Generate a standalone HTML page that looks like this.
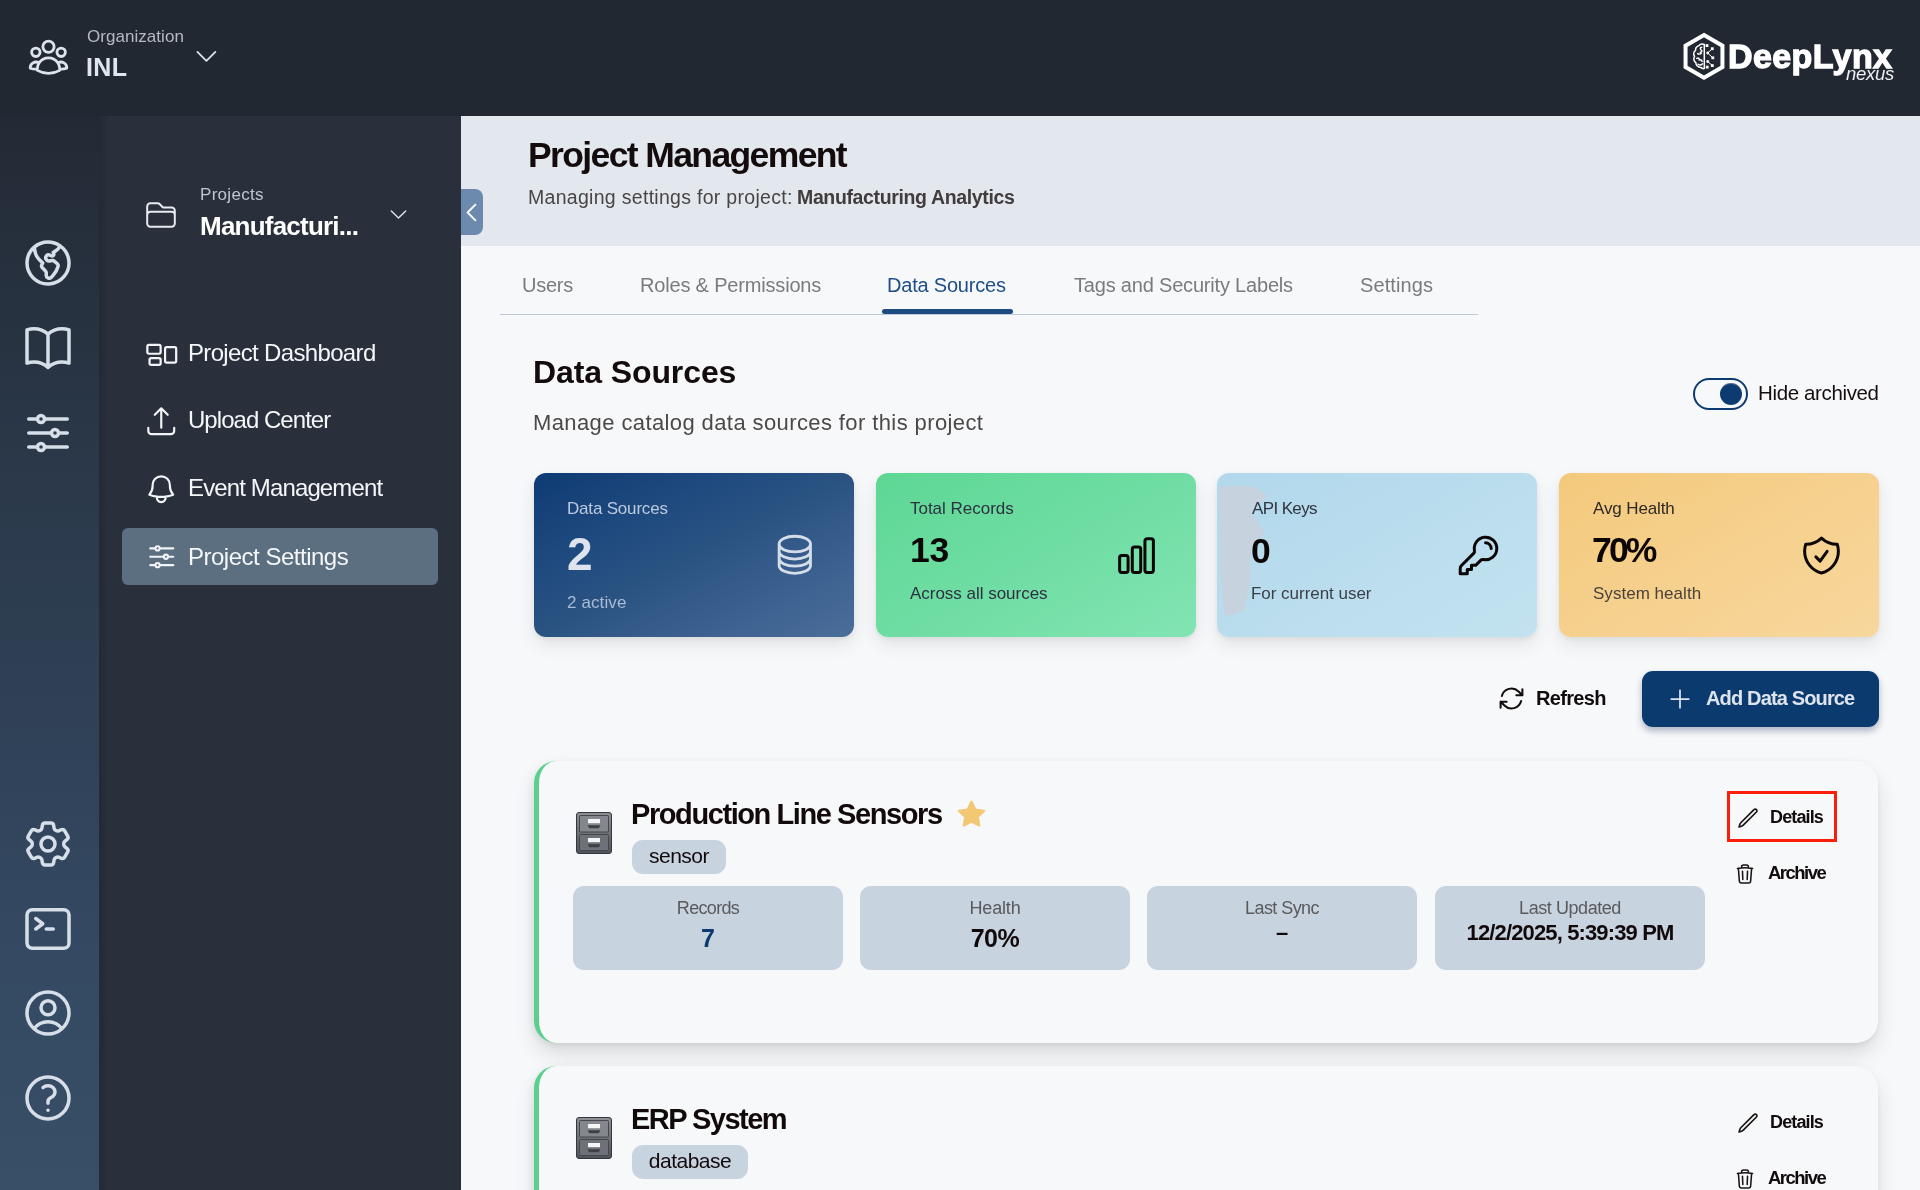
<!DOCTYPE html>
<html><head><meta charset="utf-8"><title>Project Management</title>
<style>
html,body{margin:0;padding:0;width:1920px;height:1190px;overflow:hidden;background:#f7f8fa;}
body{position:relative;font-family:"Liberation Sans",sans-serif;}
.t{position:absolute;white-space:nowrap;font-family:"Liberation Sans",sans-serif;will-change:transform;}
.b{position:absolute;}
.ic{position:absolute;overflow:visible;}
</style></head><body>
<div class="b" style="left:0px;top:0px;width:1920px;height:1190px;background:#f7f8fa;"></div>
<div class="b" style="left:0px;top:0px;width:99px;height:1190px;background:linear-gradient(180deg,#212731 0%,#232a35 10%,#2c3b4d 45%,#334760 75%,#384f68 100%);"></div>
<div class="b" style="left:99px;top:116px;width:362px;height:1074px;background:linear-gradient(90deg,#232a34 0px,#29303c 10px,#29303c 100%);"></div>
<div class="b" style="left:0px;top:0px;width:1920px;height:116px;background:#222831;"></div>
<div class="b" style="left:461px;top:116px;width:1459px;height:130px;background:#e3e8ef;"></div>
<svg class="ic" style="left:25.60px;top:34.20px;width:45px;height:45px;" viewBox="0 0 24 24" fill="none" stroke="#dde3ea" stroke-width="1.5" stroke-linecap="round" stroke-linejoin="round"><path d="M18 18.72a9.094 9.094 0 0 0 3.741-.479 3 3 0 0 0-4.682-2.72m.94 3.198.001.031c0 .225-.012.447-.037.666A11.944 11.944 0 0 1 12 21c-2.17 0-4.207-.576-5.963-1.584A6.062 6.062 0 0 1 6 18.719m12 0a5.971 5.971 0 0 0-.941-3.197m0 0A5.995 5.995 0 0 0 12 12.75a5.995 5.995 0 0 0-5.058 2.772m0 0a3 3 0 0 0-4.681 2.72 8.986 8.986 0 0 0 3.74.477m.94-3.197a5.971 5.971 0 0 0-.94 3.197M15 6.75a3 3 0 1 1-6 0 3 3 0 0 1 6 0Zm6 3a2.25 2.25 0 1 1-4.5 0 2.25 2.25 0 0 1 4.5 0Zm-13.5 0a2.25 2.25 0 1 1-4.5 0 2.25 2.25 0 0 1 4.5 0Z"/></svg>
<div class="t" style="top:28px;font-size:17px;font-weight:400;color:#b5bac2;letter-spacing:0.044px;line-height:17px;left:87.23px;">Organization</div>
<div class="t" style="top:55px;font-size:25px;font-weight:700;color:#dfe6ee;letter-spacing:0.413px;line-height:25px;left:86.38px;">INL</div>
<svg class="ic" style="left:191.60px;top:42.10px;width:28.8px;height:28.8px;" viewBox="0 0 24 24" fill="none" stroke="#dde3ea" stroke-width="1.5" stroke-linecap="round" stroke-linejoin="round"><path d="m19.5 8.25-7.5 7.5-7.5-7.5"/></svg>
<svg class="ic" style="left:1680px;top:30px;width:50px;height:56px" viewBox="0 0 50 56">
<path d="M24 5.1 L42.45 15.75 L42.45 37.05 L24 47.7 L5.55 37.05 L5.55 15.75 Z" fill="none" stroke="#fff" stroke-width="4" stroke-linejoin="miter"/>
<g fill="none" stroke="#fff" stroke-width="1.5" stroke-linecap="round" stroke-linejoin="round">
<path d="M24.3 14.5 C22 13.6 19.8 14.2 18.8 15.8 C16.6 16.2 15.2 18.4 15.6 20.4 C13.4 21.8 13.2 24.6 14.6 26.4 C13.2 28.4 13.8 31.4 15.8 32.6 C16 35.2 18.2 37.4 20.8 37.4 C22 38.6 23.4 38.8 24.3 38.4 Z"/>
<path d="M21.8 17.2 C20.2 17.4 19.8 19 21 19.8 C22.4 20.6 22 22.4 20.2 22.2 M17.6 23.6 C18.8 24.4 20.6 24 21.2 23.2 M16.8 28.4 C18.4 27.6 19.6 28.6 19.2 30 C20.6 29.4 22 30 22 31.4 M18.2 34.2 C19.6 35.4 21.6 35 22.4 33.8"/>
</g>
<g fill="#fff">
<rect x="25.6" y="14.2" width="2.8" height="2.8"/><rect x="30.9" y="17.3" width="2.8" height="2.8"/><circle cx="27.7" cy="23" r="1.4"/><rect x="31.4" y="26.4" width="2.8" height="2.8"/><circle cx="27.7" cy="31.5" r="1.4"/><rect x="30.9" y="34.2" width="2.8" height="2.8"/><rect x="25.8" y="35.7" width="2.8" height="2.8"/>
</g>
<g stroke="#fff" stroke-width="1"><path d="M27.7 23 L32.3 18.7 M27.7 23 L32.8 27.8 M27.7 31.5 L32.3 35.6"/></g>
</svg>
<div class="t" style="top:39px;font-size:34px;font-weight:700;color:#ffffff;letter-spacing:0.389px;line-height:34px;left:1728.29px;-webkit-text-stroke:1.3px #fff;">DeepLynx</div>
<div class="t" style="left:1846px;top:64.84px;font-size:18.5px;line-height:18.5px;font-style:italic;font-weight:400;color:#eef0f3;letter-spacing:-0.3px;">nexus</div>
<svg class="ic" style="left:20.00px;top:235.00px;width:56px;height:56px;" viewBox="0 0 24 24" fill="none" stroke="#d6dee8" stroke-width="1.5" stroke-linecap="round" stroke-linejoin="round"><path d="m6.115 5.19.319 1.913A6 6 0 0 0 8.11 10.36L9.75 12l-.387.775c-.217.433-.132.956.21 1.298l1.348 1.348c.21.21.329.497.329.795v1.089c0 .426.24.815.622 1.006l.153.076c.433.217.956.132 1.298-.21l.723-.723a8.7 8.7 0 0 0 2.288-4.042 1.087 1.087 0 0 0-.358-1.099l-1.33-1.108c-.251-.21-.582-.299-.905-.245l-1.17.195a1.125 1.125 0 0 1-.98-.314l-.295-.295a1.125 1.125 0 0 1 0-1.591l.13-.132a1.125 1.125 0 0 1 1.3-.21l.603.302a.809.809 0 0 0 1.086-1.086L14.25 7.5l1.256-.837a4.5 4.5 0 0 0 1.528-1.732l.146-.292M6.115 5.19A9 9 0 1 0 17.18 4.64M6.115 5.19A8.965 8.965 0 0 1 12 3c1.929 0 3.716.607 5.18 1.64"/></svg>
<svg class="ic" style="left:20.00px;top:320.00px;width:56px;height:56px;" viewBox="0 0 24 24" fill="none" stroke="#d6dee8" stroke-width="1.5" stroke-linecap="round" stroke-linejoin="round"><path d="M12 6.042A8.967 8.967 0 0 0 6 3.75c-1.052 0-2.062.18-3 .512v14.25A8.987 8.987 0 0 1 6 18c2.305 0 4.408.867 6 2.292m0-14.25a8.966 8.966 0 0 1 6-2.292c1.052 0 2.062.18 3 .512v14.25A8.987 8.987 0 0 0 18 18a8.967 8.967 0 0 0-6 2.292m0-14.25v14.25"/></svg>
<svg class="ic" style="left:20.00px;top:405.00px;width:56px;height:56px;" viewBox="0 0 24 24" fill="none" stroke="#d6dee8" stroke-width="1.5" stroke-linecap="round" stroke-linejoin="round"><path d="M10.5 6h9.75M10.5 6a1.5 1.5 0 1 1-3 0m3 0a1.5 1.5 0 1 0-3 0M3.75 6H7.5m3 12h9.75m-9.75 0a1.5 1.5 0 0 1-3 0m3 0a1.5 1.5 0 0 0-3 0m-3.75 0H7.5m9-6h3.75m-3.75 0a1.5 1.5 0 0 1-3 0m3 0a1.5 1.5 0 0 0-3 0m-9.75 0h9.75"/></svg>
<svg class="ic" style="left:20.00px;top:816.00px;width:56px;height:56px;" viewBox="0 0 24 24" fill="none" stroke="#d6dee8" stroke-width="1.5" stroke-linecap="round" stroke-linejoin="round"><path d="M9.594 3.94c.09-.542.56-.94 1.11-.94h2.593c.55 0 1.02.398 1.11.94l.213 1.281c.063.374.313.686.645.87.074.04.147.083.22.127.325.196.72.257 1.075.124l1.217-.456a1.125 1.125 0 0 1 1.37.49l1.296 2.247a1.125 1.125 0 0 1-.26 1.431l-1.003.827c-.293.241-.438.613-.43.992a7.723 7.723 0 0 1 0 .255c-.008.378.137.75.43.991l1.004.827c.424.35.534.955.26 1.43l-1.298 2.247a1.125 1.125 0 0 1-1.369.491l-1.217-.456c-.355-.133-.75-.072-1.076.124a6.47 6.47 0 0 1-.22.128c-.331.183-.581.495-.644.869l-.213 1.281c-.09.543-.56.94-1.11.94h-2.594c-.55 0-1.019-.398-1.11-.94l-.213-1.281c-.062-.374-.312-.686-.644-.87a6.52 6.52 0 0 1-.22-.127c-.325-.196-.72-.257-1.076-.124l-1.217.456a1.125 1.125 0 0 1-1.369-.49l-1.297-2.247a1.125 1.125 0 0 1 .26-1.431l1.004-.827c.292-.24.437-.613.43-.991a6.932 6.932 0 0 1 0-.255c.007-.38-.138-.751-.43-.992l-1.004-.827a1.125 1.125 0 0 1-.26-1.43l1.297-2.247a1.125 1.125 0 0 1 1.37-.491l1.216.456c.356.133.751.072 1.076-.124.072-.044.146-.086.22-.128.332-.183.582-.495.644-.869l.214-1.28Z"/><path d="M15 12a3 3 0 1 1-6 0 3 3 0 0 1 6 0Z"/></svg>
<svg class="ic" style="left:20.00px;top:901.00px;width:56px;height:56px;" viewBox="0 0 24 24" fill="none" stroke="#d6dee8" stroke-width="1.5" stroke-linecap="round" stroke-linejoin="round"><path d="m6.75 7.5 3 2.25-3 2.25m4.5 0h3m-9 8.25h13.5A2.25 2.25 0 0 0 21 18V6a2.25 2.25 0 0 0-2.25-2.25H5.25A2.25 2.25 0 0 0 3 6v12a2.25 2.25 0 0 0 2.25 2.25Z"/></svg>
<svg class="ic" style="left:20.00px;top:985.00px;width:56px;height:56px;" viewBox="0 0 24 24" fill="none" stroke="#d6dee8" stroke-width="1.5" stroke-linecap="round" stroke-linejoin="round"><path d="M17.982 18.725A7.488 7.488 0 0 0 12 15.75a7.488 7.488 0 0 0-5.982 2.975m11.963 0a9 9 0 1 0-11.963 0m11.963 0A8.966 8.966 0 0 1 12 21a8.966 8.966 0 0 1-5.982-2.275M15 9.75a3 3 0 1 1-6 0 3 3 0 0 1 6 0Z"/></svg>
<svg class="ic" style="left:20.00px;top:1070.00px;width:56px;height:56px;" viewBox="0 0 24 24" fill="none" stroke="#d6dee8" stroke-width="1.5" stroke-linecap="round" stroke-linejoin="round"><path d="M9.879 7.519c1.171-1.025 3.071-1.025 4.242 0 1.172 1.025 1.172 2.687 0 3.712-.203.179-.43.326-.67.442-.745.361-1.45.999-1.45 1.827v.75M21 12a9 9 0 1 1-18 0 9 9 0 0 1 18 0Zm-9 5.25h.008v.008H12v-.008Z"/></svg>
<svg class="ic" style="left:143.80px;top:197.75px;width:34px;height:34px;" viewBox="0 0 24 24" fill="none" stroke="#e8ecf0" stroke-width="1.4" stroke-linecap="round" stroke-linejoin="round"><path d="M2.25 12.75V12A2.25 2.25 0 0 1 4.5 9.75h15A2.25 2.25 0 0 1 21.75 12v.75m-8.69-6.44-2.12-2.12a1.5 1.5 0 0 0-1.061-.44H4.5A2.25 2.25 0 0 0 2.25 6v12a2.25 2.25 0 0 0 2.25 2.25h15A2.25 2.25 0 0 0 21.75 18V9a2.25 2.25 0 0 0-2.25-2.25h-5.379a1.5 1.5 0 0 1-1.06-.44Z"/></svg>
<div class="t" style="top:186px;font-size:17px;font-weight:400;color:#c0c6cf;letter-spacing:0.298px;line-height:17px;left:199.64px;">Projects</div>
<div class="t" style="top:213px;font-size:26px;font-weight:700;color:#ffffff;letter-spacing:-0.778px;line-height:26px;left:199.81px;">Manufacturi...</div>
<svg class="ic" style="left:386.50px;top:203.00px;width:23px;height:23px;" viewBox="0 0 24 24" fill="none" stroke="#dde3ea" stroke-width="1.5" stroke-linecap="round" stroke-linejoin="round"><path d="m19.5 8.25-7.5 7.5-7.5-7.5"/></svg>
<div class="b" style="left:122px;top:528px;width:316px;height:57px;background:#5b6f80;border-radius:6px;"></div>
<svg class="ic" style="left:143.75px;top:335.75px;width:35.5px;height:35.5px;" viewBox="0 0 24 24" fill="none" stroke="#f2f4f7" stroke-width="1.5" stroke-linecap="round" stroke-linejoin="round"><path d="M2.25 7.125c0-.621.504-1.125 1.125-1.125h6.75c.621 0 1.125.504 1.125 1.125v3.75c0 .621-.504 1.125-1.125 1.125h-6.75a1.125 1.125 0 0 1-1.125-1.125v-3.75ZM14.25 8.625c0-.621.504-1.125 1.125-1.125h5.25c.621 0 1.125.504 1.125 1.125v8.25c0 .621-.504 1.125-1.125 1.125h-5.25a1.125 1.125 0 0 1-1.125-1.125v-8.25ZM3.75 16.125c0-.621.504-1.125 1.125-1.125h5.25c.621 0 1.125.504 1.125 1.125v2.25c0 .621-.504 1.125-1.125 1.125h-5.25a1.125 1.125 0 0 1-1.125-1.125v-2.25Z"/></svg>
<div class="t" style="top:341px;font-size:24px;font-weight:400;color:#f4f6f8;letter-spacing:-0.659px;line-height:24px;left:188.08px;">Project Dashboard</div>
<svg class="ic" style="left:143.95px;top:403.55px;width:34.5px;height:34.5px;" viewBox="0 0 24 24" fill="none" stroke="#f2f4f7" stroke-width="1.5" stroke-linecap="round" stroke-linejoin="round"><path d="M3 16.5v2.25A2.25 2.25 0 0 0 5.25 21h13.5A2.25 2.25 0 0 0 21 18.75V16.5m-13.5-9L12 3m0 0 4.5 4.5M12 3v13.5"/></svg>
<div class="t" style="top:408px;font-size:24px;font-weight:400;color:#f4f6f8;letter-spacing:-0.960px;line-height:24px;left:188.20px;">Upload Center</div>
<svg class="ic" style="left:143.75px;top:471.75px;width:34.5px;height:34.5px;" viewBox="0 0 24 24" fill="none" stroke="#f2f4f7" stroke-width="1.5" stroke-linecap="round" stroke-linejoin="round"><path d="M14.857 17.082a23.848 23.848 0 0 0 5.454-1.31A8.967 8.967 0 0 1 18 9.75V9A6 6 0 0 0 6 9v.75a8.967 8.967 0 0 1-2.312 6.022c1.733.64 3.56 1.085 5.455 1.31m5.714 0a24.255 24.255 0 0 1-5.714 0m5.714 0a3 3 0 1 1-5.714 0"/></svg>
<div class="t" style="top:476px;font-size:24px;font-weight:400;color:#f4f6f8;letter-spacing:-0.869px;line-height:24px;left:188.08px;">Event Management</div>
<svg class="ic" style="left:144.75px;top:540.05px;width:33.5px;height:33.5px;" viewBox="0 0 24 24" fill="none" stroke="#f2f4f7" stroke-width="1.5" stroke-linecap="round" stroke-linejoin="round"><path d="M10.5 6h9.75M10.5 6a1.5 1.5 0 1 1-3 0m3 0a1.5 1.5 0 1 0-3 0M3.75 6H7.5m3 12h9.75m-9.75 0a1.5 1.5 0 0 1-3 0m3 0a1.5 1.5 0 0 0-3 0m-3.75 0H7.5m9-6h3.75m-3.75 0a1.5 1.5 0 0 1-3 0m3 0a1.5 1.5 0 0 0-3 0m-9.75 0h9.75"/></svg>
<div class="t" style="top:545px;font-size:24px;font-weight:400;color:#f4f6f8;letter-spacing:-0.491px;line-height:24px;left:188.08px;">Project Settings</div>
<div class="b" style="left:461px;top:189px;width:22px;height:46px;background:#6b8aad;border-radius:0 8px 8px 0;"></div>
<svg class="ic" style="left:459.40px;top:199.80px;width:25px;height:25px;" viewBox="0 0 24 24" fill="none" stroke="#ffffff" stroke-width="1.8" stroke-linecap="round" stroke-linejoin="round"><path d="M15.75 19.5 8.25 12l7.5-7.5"/></svg>
<div class="t" style="top:137px;font-size:35.5px;font-weight:700;color:#140c0c;letter-spacing:-1.619px;line-height:36px;left:527.69px;">Project Management</div>
<div class="t" style="top:187px;font-size:19.5px;font-weight:400;color:#4a4545;letter-spacing:0.296px;line-height:20px;left:528.14px;">Managing settings for project:</div>
<div class="t" style="top:187px;font-size:19.5px;font-weight:700;color:#433c3c;letter-spacing:-0.362px;line-height:20px;left:796.73px;">Manufacturing Analytics</div>
<div class="t" style="top:275px;font-size:20px;font-weight:400;color:#7b7b7b;letter-spacing:-0.250px;line-height:20px;left:521.50px;">Users</div>
<div class="t" style="top:275px;font-size:20px;font-weight:400;color:#7b7b7b;letter-spacing:-0.178px;line-height:20px;left:639.60px;">Roles &amp; Permissions</div>
<div class="t" style="top:275px;font-size:20px;font-weight:400;color:#1f4e85;letter-spacing:-0.200px;line-height:20px;left:887.10px;">Data Sources</div>
<div class="t" style="top:275px;font-size:20px;font-weight:400;color:#7b7b7b;letter-spacing:-0.191px;line-height:20px;left:1073.60px;">Tags and Security Labels</div>
<div class="t" style="top:275px;font-size:20px;font-weight:400;color:#7b7b7b;letter-spacing:0.100px;line-height:20px;left:1359.90px;">Settings</div>
<div class="b" style="left:500px;top:314px;width:978px;height:1px;background:#bfcad8;"></div>
<div class="b" style="left:882px;top:309.3px;width:130.7px;height:4.7px;background:#1f4c80;border-radius:3px;"></div>
<div class="t" style="top:356px;font-size:32px;font-weight:700;color:#140c0c;letter-spacing:-0.102px;line-height:32px;left:532.92px;">Data Sources</div>
<div class="t" style="top:412px;font-size:22px;font-weight:400;color:#4d4848;letter-spacing:0.396px;line-height:22px;left:533.24px;">Manage catalog data sources for this project</div>
<div class="b" style="left:1693px;top:377.6px;width:54.5px;height:32.8px;box-sizing:border-box;border:2.6px solid #0d3a70;border-radius:17px;background:#f7f8fa;"></div>
<div class="b" style="left:1720px;top:383px;width:22px;height:22px;background:#0d3a70;border-radius:50%;box-shadow:inset 0 2px 1px -1px rgba(255,255,255,0.28);"></div>
<div class="t" style="top:382px;font-size:20.5px;font-weight:400;color:#150e0e;letter-spacing:-0.365px;line-height:21px;left:1758.36px;">Hide archived</div>
<div class="b" style="left:534px;top:473px;width:320px;height:164px;background:linear-gradient(to bottom right,#0e3b73 0%,#1f4a7f 30%,#2a5382 50%,#3a5f8f 72%,#4b6e9a 100%);border-radius:12px;box-shadow:0 8px 18px rgba(0,0,0,0.085),0 2px 4px rgba(0,0,0,0.05);"></div>
<div class="b" style="left:876px;top:473px;width:320px;height:164px;background:linear-gradient(150deg,#5dd794 0%,#6fdda3 50%,#82e4b3 100%);border-radius:12px;box-shadow:0 8px 18px rgba(0,0,0,0.085),0 2px 4px rgba(0,0,0,0.05);"></div>
<div class="b" style="left:1217px;top:473px;width:320px;height:164px;background:linear-gradient(150deg,#b2d8ec 0%,#bcdeee 60%,#c2e2ef 100%);border-radius:12px;box-shadow:0 8px 18px rgba(0,0,0,0.085),0 2px 4px rgba(0,0,0,0.05);"></div>
<div class="b" style="left:1559px;top:473px;width:320px;height:164px;background:linear-gradient(150deg,#f3c97c 0%,#f6d18f 55%,#f8d79d 100%);border-radius:12px;box-shadow:0 8px 18px rgba(0,0,0,0.085),0 2px 4px rgba(0,0,0,0.05);"></div>
<svg class="ic" style="left:1217px;top:484px;width:60px;height:135px" viewBox="0 0 60 135"><path d="M3 2.4 L30.1 1.7 C40 3 46 7 50.1 12.4 L33.7 28.9 C40 35 44 42 47.3 48.9 L33.7 66 L33 100.3 L27.3 126 L17.3 130.3 L7.3 131.7 L3.7 86 Z" fill="#c6d2de"/></svg>
<div class="t" style="top:500px;font-size:17px;font-weight:400;color:#bccade;letter-spacing:-0.188px;line-height:17px;left:566.94px;">Data Sources</div>
<div class="t" style="top:531px;font-size:46px;font-weight:700;color:#dde4ee;letter-spacing:0.000px;line-height:46px;left:567.09px;">2</div>
<div class="t" style="top:594px;font-size:17px;font-weight:400;color:#a9bcd4;letter-spacing:0.121px;line-height:17px;left:567.45px;">2 active</div>
<svg class="ic" style="left:771.80px;top:532.40px;width:45.6px;height:45.6px;" viewBox="0 0 24 24" fill="none" stroke="#d5dde8" stroke-width="1.5" stroke-linecap="round" stroke-linejoin="round"><path d="M20.25 6.375c0 2.278-3.694 4.125-8.25 4.125S3.75 8.653 3.75 6.375m16.5 0c0-2.278-3.694-4.125-8.25-4.125S3.75 4.097 3.75 6.375m16.5 0v11.25c0 2.278-3.694 4.125-8.25 4.125s-8.25-1.847-8.25-4.125V6.375m16.5 0v3.75m-16.5-3.75v3.75m16.5 0v3.75C20.25 16.153 16.556 18 12 18s-8.25-1.847-8.25-4.125v-3.75m16.5 0c0 2.278-3.694 4.125-8.25 4.125s-8.25-1.847-8.25-4.125"/></svg>
<div class="t" style="top:500px;font-size:17px;font-weight:400;color:#2c3140;letter-spacing:-0.018px;line-height:17px;left:909.66px;">Total Records</div>
<div class="t" style="top:532px;font-size:35.5px;font-weight:700;color:#0d0606;letter-spacing:-0.233px;line-height:36px;left:909.57px;">13</div>
<div class="t" style="top:585px;font-size:17px;font-weight:400;color:#2c3140;letter-spacing:-0.021px;line-height:17px;left:910.00px;">Across all sources</div>
<svg class="ic" style="left:1114.00px;top:532.90px;width:45px;height:45px;" viewBox="0 0 24 24" fill="none" stroke="#0d0606" stroke-width="1.6" stroke-linecap="round" stroke-linejoin="round"><path d="M3 13.125C3 12.504 3.504 12 4.125 12h2.25c.621 0 1.125.504 1.125 1.125v6.75C7.5 20.496 6.996 21 6.375 21h-2.25A1.125 1.125 0 0 1 3 19.875v-6.75ZM9.75 8.625c0-.621.504-1.125 1.125-1.125h2.25c.621 0 1.125.504 1.125 1.125v11.25c0 .621-.504 1.125-1.125 1.125h-2.25a1.125 1.125 0 0 1-1.125-1.125V8.625ZM16.5 4.125c0-.621.504-1.125 1.125-1.125h2.25C20.496 3 21 3.504 21 4.125v15.75c0 .621-.504 1.125-1.125 1.125h-2.25a1.125 1.125 0 0 1-1.125-1.125V4.125Z"/></svg>
<div class="t" style="top:500px;font-size:17px;font-weight:400;color:#2f3540;letter-spacing:-0.623px;line-height:17px;left:1251.70px;">API Keys</div>
<div class="t" style="top:533px;font-size:35.5px;font-weight:700;color:#0d0606;letter-spacing:0.000px;line-height:36px;left:1250.58px;">0</div>
<div class="t" style="top:585px;font-size:17px;font-weight:400;color:#3a3f48;letter-spacing:-0.030px;line-height:17px;left:1250.64px;">For current user</div>
<svg class="ic" style="left:1456.00px;top:532.75px;width:45px;height:45px;" viewBox="0 0 24 24" fill="none" stroke="#0d0606" stroke-width="1.6" stroke-linecap="round" stroke-linejoin="round"><path d="M15.75 5.25a3 3 0 0 1 3 3m3 0a6 6 0 0 1-7.029 5.912c-.563-.097-1.159.026-1.563.43L10.5 17.25H8.25v2.25H6v2.25H2.25v-2.818c0-.597.237-1.17.659-1.591l6.499-6.499c.404-.404.527-1 .43-1.563A6 6 0 1 1 21.75 8.25Z"/></svg>
<div class="t" style="top:500px;font-size:17px;font-weight:400;color:#2f2a26;letter-spacing:-0.119px;line-height:17px;left:1593.30px;">Avg Health</div>
<div class="t" style="top:532px;font-size:35.5px;font-weight:700;color:#0d0606;letter-spacing:-2.846px;line-height:36px;left:1591.88px;">70%</div>
<div class="t" style="top:585px;font-size:17px;font-weight:400;color:#4a423a;letter-spacing:0.031px;line-height:17px;left:1592.53px;">System health</div>
<svg class="ic" style="left:1799.35px;top:532.75px;width:45px;height:45px;" viewBox="0 0 24 24" fill="none" stroke="#0d0606" stroke-width="1.6" stroke-linecap="round" stroke-linejoin="round"><path d="M9 12.75 11.25 15 15 9.75m-3-7.036A11.959 11.959 0 0 1 3.598 6 11.99 11.99 0 0 0 3 9.749c0 5.592 3.824 10.29 9 11.623 5.176-1.332 9-6.03 9-11.622 0-1.31-.21-2.571-.598-3.751h-.152c-3.196 0-6.1-1.248-8.25-3.285Z"/></svg>
<svg class="ic" style="left:1496.70px;top:684.10px;width:29px;height:29px;" viewBox="0 0 24 24" fill="none" stroke="#120c0c" stroke-width="1.7" stroke-linecap="round" stroke-linejoin="round"><path d="M16.023 9.348h4.992v-.001M2.985 19.644v-4.992m0 0h4.992m-4.993 0 3.181 3.183a8.25 8.25 0 0 0 13.803-3.7M4.031 9.865a8.25 8.25 0 0 1 13.803-3.7l3.181 3.182m0-4.991v4.99"/></svg>
<div class="t" style="top:688px;font-size:20px;font-weight:700;color:#120c0c;letter-spacing:-0.667px;line-height:20px;left:1536.00px;">Refresh</div>
<div class="b" style="left:1642px;top:671px;width:237px;height:55.5px;background:#0b3a6e;border-radius:11px;box-shadow:0 4px 7px rgba(11,40,80,0.32);"></div>
<svg class="ic" style="left:1666.00px;top:685.00px;width:28px;height:28px;" viewBox="0 0 24 24" fill="none" stroke="#dde4ee" stroke-width="1.5" stroke-linecap="round" stroke-linejoin="round"><path d="M12 4.5v15m7.5-7.5h-15"/></svg>
<div class="t" style="top:688px;font-size:20px;font-weight:700;color:#dde4ee;letter-spacing:-0.850px;line-height:20px;left:1705.50px;">Add Data Source</div>
<div class="b" style="left:534px;top:761px;width:1344px;height:282px;background:#f7f8fa;border-radius:22px;box-shadow:0 12px 22px -2px rgba(0,0,0,0.13),0 3px 6px -1px rgba(0,0,0,0.06),-3px 0 10px rgba(0,0,0,0.03);"></div>
<div class="b" style="left:534px;top:761px;width:40px;height:282px;border-left:5px solid #5ccf8e;border-radius:22px 0 0 22px;box-sizing:border-box;"></div>
<svg class="ic" style="left:576px;top:812px;width:36px;height:42px" viewBox="0 0 36 42"><defs><linearGradient id="cg761" x1="0" y1="0" x2="0" y2="1"><stop offset="0" stop-color="#8c8f95"/><stop offset="1" stop-color="#50545a"/></linearGradient></defs><rect x="0.5" y="0.5" width="35" height="41" rx="2.5" fill="url(#cg761)" stroke="#33363b" stroke-width="1"/><rect x="3.5" y="3.5" width="29" height="16.5" rx="1" fill="#84878d" stroke="#44474c" stroke-width="1"/><rect x="3.5" y="22.5" width="29" height="16" rx="1" fill="#6e7278" stroke="#44474c" stroke-width="1"/><rect x="12" y="7" width="12" height="4.2" fill="#f4f4f4"/><rect x="12" y="26" width="12" height="4.2" fill="#f4f4f4"/><path d="M11.5 13.2 h13 l-1.8 3 h-9.4z" fill="#3d4146"/><path d="M11.5 32.2 h13 l-1.8 3 h-9.4z" fill="#3d4146"/></svg>
<div class="t" style="top:800px;font-size:29px;font-weight:700;color:#120a0a;letter-spacing:-1.417px;line-height:29px;left:631.41px;">Production Line Sensors</div>
<div class="b" style="left:632px;top:840px;width:94px;height:34px;background:#c8d3e0;border-radius:11px;"></div>
<div class="t" style="top:845px;font-size:21px;font-weight:400;color:#120a0a;letter-spacing:0.000px;line-height:21px;left:379.00px;width:600px;text-align:center;letter-spacing:-0.5px;">sensor</div>
<svg class="ic" style="left:1737.00px;top:806.50px;width:22px;height:22px;" viewBox="0 0 24 24" fill="none" stroke="#1a1414" stroke-width="1.8" stroke-linecap="round" stroke-linejoin="round"><path d="m16.862 4.487 1.687-1.688a1.875 1.875 0 1 1 2.652 2.652L6.832 19.82a4.5 4.5 0 0 1-1.897 1.13l-2.685.8.8-2.685a4.5 4.5 0 0 1 1.13-1.897L16.863 4.487Z"/></svg>
<div class="t" style="top:808px;font-size:18px;font-weight:700;color:#120c0c;letter-spacing:-0.858px;line-height:18px;left:1769.83px;">Details</div>
<svg class="ic" style="left:1734.00px;top:863.00px;width:22px;height:22px;" viewBox="0 0 24 24" fill="none" stroke="#1a1414" stroke-width="1.7" stroke-linecap="round" stroke-linejoin="round"><path d="m14.74 9-.346 9m-4.788 0L9.26 9m9.968-3.21c.342.052.682.107 1.022.166m-1.022-.165L18.16 19.673a2.25 2.25 0 0 1-2.244 2.077H8.084a2.25 2.25 0 0 1-2.244-2.077L4.772 5.79m14.456 0a48.108 48.108 0 0 0-3.478-.397m-12 .562c.34-.059.68-.114 1.022-.165m0 0a48.11 48.11 0 0 1 3.478-.397m7.5 0v-.916c0-1.18-.91-2.164-2.09-2.201a51.964 51.964 0 0 0-3.32 0c-1.18.037-2.09 1.022-2.09 2.201v.916m7.5 0a48.667 48.667 0 0 0-7.5 0"/></svg>
<div class="t" style="top:863px;font-size:18.5px;font-weight:700;color:#120c0c;letter-spacing:-1.515px;line-height:19px;left:1767.94px;">Archive</div>
<svg class="ic" style="left:954.5px;top:799.3px;width:33px;height:31px" viewBox="0 0 24 24"><path d="M12 2.2l2.95 6.1 6.65.9-4.85 4.65 1.2 6.6L12 17.3l-5.95 3.15 1.2-6.6L2.4 9.2l6.65-.9z" fill="#f3c875" stroke="#f3c875" stroke-width="1.9" stroke-linejoin="round"/></svg>
<div class="b" style="left:573px;top:886px;width:270px;height:84px;background:#c8d3e0;border-radius:11px;"></div>
<div class="t" style="top:899px;font-size:18px;font-weight:400;color:#5a5a5a;letter-spacing:-0.663px;line-height:18px;left:408.00px;width:600px;text-align:center;">Records</div>
<div class="t" style="top:926px;font-size:25px;font-weight:700;color:#0d3a70;letter-spacing:0.000px;line-height:25px;left:408.00px;width:600px;text-align:center;">7</div>
<div class="b" style="left:860px;top:886px;width:270px;height:84px;background:#c8d3e0;border-radius:11px;"></div>
<div class="t" style="top:899px;font-size:18px;font-weight:400;color:#5a5a5a;letter-spacing:-0.182px;line-height:18px;left:695.00px;width:600px;text-align:center;">Health</div>
<div class="t" style="top:926px;font-size:25px;font-weight:700;color:#120a0a;letter-spacing:-0.488px;line-height:25px;left:695.00px;width:600px;text-align:center;">70%</div>
<div class="b" style="left:1147px;top:886px;width:270px;height:84px;background:#c8d3e0;border-radius:11px;"></div>
<div class="t" style="top:899px;font-size:18px;font-weight:400;color:#5a5a5a;letter-spacing:-0.579px;line-height:18px;left:982.00px;width:600px;text-align:center;">Last Sync</div>
<div class="t" style="top:922px;font-size:22px;font-weight:700;color:#120a0a;letter-spacing:0.000px;line-height:22px;left:982.00px;width:600px;text-align:center;">–</div>
<div class="b" style="left:1434.5px;top:886px;width:270px;height:84px;background:#c8d3e0;border-radius:11px;"></div>
<div class="t" style="top:899px;font-size:18px;font-weight:400;color:#5a5a5a;letter-spacing:-0.435px;line-height:18px;left:1269.50px;width:600px;text-align:center;">Last Updated</div>
<div class="t" style="top:922px;font-size:22px;font-weight:700;color:#120a0a;letter-spacing:-0.860px;line-height:22px;left:1269.50px;width:600px;text-align:center;">12/2/2025, 5:39:39 PM</div>
<div class="b" style="left:1727.3px;top:791.3px;width:109.7px;height:51.2px;box-sizing:border-box;border:3.8px solid #fc1e0a;"></div>
<div class="b" style="left:534px;top:1066px;width:1344px;height:282px;background:#f7f8fa;border-radius:22px;box-shadow:0 12px 22px -2px rgba(0,0,0,0.13),0 3px 6px -1px rgba(0,0,0,0.06),-3px 0 10px rgba(0,0,0,0.03);"></div>
<div class="b" style="left:534px;top:1066px;width:40px;height:282px;border-left:5px solid #5ccf8e;border-radius:22px 0 0 22px;box-sizing:border-box;"></div>
<svg class="ic" style="left:576px;top:1117px;width:36px;height:42px" viewBox="0 0 36 42"><defs><linearGradient id="cg1066" x1="0" y1="0" x2="0" y2="1"><stop offset="0" stop-color="#8c8f95"/><stop offset="1" stop-color="#50545a"/></linearGradient></defs><rect x="0.5" y="0.5" width="35" height="41" rx="2.5" fill="url(#cg1066)" stroke="#33363b" stroke-width="1"/><rect x="3.5" y="3.5" width="29" height="16.5" rx="1" fill="#84878d" stroke="#44474c" stroke-width="1"/><rect x="3.5" y="22.5" width="29" height="16" rx="1" fill="#6e7278" stroke="#44474c" stroke-width="1"/><rect x="12" y="7" width="12" height="4.2" fill="#f4f4f4"/><rect x="12" y="26" width="12" height="4.2" fill="#f4f4f4"/><path d="M11.5 13.2 h13 l-1.8 3 h-9.4z" fill="#3d4146"/><path d="M11.5 32.2 h13 l-1.8 3 h-9.4z" fill="#3d4146"/></svg>
<div class="t" style="top:1105px;font-size:29px;font-weight:700;color:#120a0a;letter-spacing:-1.528px;line-height:29px;left:631.41px;">ERP System</div>
<div class="b" style="left:632px;top:1145px;width:116px;height:34px;background:#c8d3e0;border-radius:11px;"></div>
<div class="t" style="top:1150px;font-size:21px;font-weight:400;color:#120a0a;letter-spacing:0.000px;line-height:21px;left:390.00px;width:600px;text-align:center;letter-spacing:-0.5px;">database</div>
<svg class="ic" style="left:1737.00px;top:1111.50px;width:22px;height:22px;" viewBox="0 0 24 24" fill="none" stroke="#1a1414" stroke-width="1.8" stroke-linecap="round" stroke-linejoin="round"><path d="m16.862 4.487 1.687-1.688a1.875 1.875 0 1 1 2.652 2.652L6.832 19.82a4.5 4.5 0 0 1-1.897 1.13l-2.685.8.8-2.685a4.5 4.5 0 0 1 1.13-1.897L16.863 4.487Z"/></svg>
<div class="t" style="top:1113px;font-size:18px;font-weight:700;color:#120c0c;letter-spacing:-0.858px;line-height:18px;left:1769.83px;">Details</div>
<svg class="ic" style="left:1734.00px;top:1168.00px;width:22px;height:22px;" viewBox="0 0 24 24" fill="none" stroke="#1a1414" stroke-width="1.7" stroke-linecap="round" stroke-linejoin="round"><path d="m14.74 9-.346 9m-4.788 0L9.26 9m9.968-3.21c.342.052.682.107 1.022.166m-1.022-.165L18.16 19.673a2.25 2.25 0 0 1-2.244 2.077H8.084a2.25 2.25 0 0 1-2.244-2.077L4.772 5.79m14.456 0a48.108 48.108 0 0 0-3.478-.397m-12 .562c.34-.059.68-.114 1.022-.165m0 0a48.11 48.11 0 0 1 3.478-.397m7.5 0v-.916c0-1.18-.91-2.164-2.09-2.201a51.964 51.964 0 0 0-3.32 0c-1.18.037-2.09 1.022-2.09 2.201v.916m7.5 0a48.667 48.667 0 0 0-7.5 0"/></svg>
<div class="t" style="top:1168px;font-size:18.5px;font-weight:700;color:#120c0c;letter-spacing:-1.515px;line-height:19px;left:1767.94px;">Archive</div>
</body></html>
